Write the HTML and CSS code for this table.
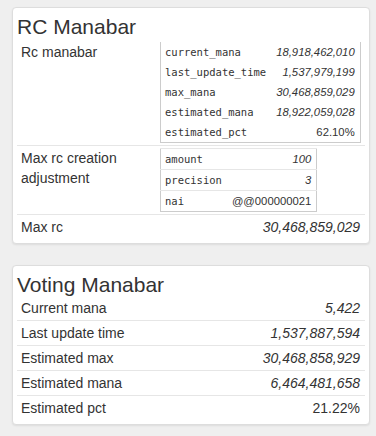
FILE: index.html
```html
<!DOCTYPE html>
<html lang="en">
<head>
    <meta charset="UTF-8">
    <meta name="viewport" content="width=device-width, initial-scale=1.0">
    <title>Manabars</title>
    <link rel="stylesheet" href="styles.css">
</head>
<body>
    <div class="panel">
        <h2>RC Manabar</h2>
        <table class="info-table rc-table">
            <tr>
                <td class="label">Rc manabar</td>
                <td>
                    <table class="sub-table open-top">
                        <tr><td class="key">current_mana</td><td class="num">18,918,462,010</td></tr>
                        <tr><td class="key">last_update_time</td><td class="num">1,537,979,199</td></tr>
                        <tr><td class="key">max_mana</td><td class="num">30,468,859,029</td></tr>
                        <tr><td class="key">estimated_mana</td><td class="num">18,922,059,028</td></tr>
                        <tr><td class="key">estimated_pct</td><td class="plain">62.10%</td></tr>
                    </table>
                </td>
            </tr>
            <tr>
                <td class="label">Max rc creation adjustment</td>
                <td>
                    <table class="sub-table lined">
                        <tr><td class="key">amount</td><td class="num">100</td></tr>
                        <tr><td class="key">precision</td><td class="num">3</td></tr>
                        <tr><td class="key">nai</td><td class="plain">@@000000021</td></tr>
                    </table>
                </td>
            </tr>
            <tr>
                <td class="label">Max rc</td>
                <td class="value num">30,468,859,029</td>
            </tr>
        </table>
    </div>

    <div class="panel">
        <h2>Voting Manabar</h2>
        <table class="info-table">
            <tr><td class="label">Current mana</td><td class="value num">5,422</td></tr>
            <tr><td class="label">Last update time</td><td class="value num">1,537,887,594</td></tr>
            <tr><td class="label">Estimated max</td><td class="value num">30,468,858,929</td></tr>
            <tr><td class="label">Estimated mana</td><td class="value num">6,464,481,658</td></tr>
            <tr><td class="label">Estimated pct</td><td class="value plain">21.22%</td></tr>
        </table>
    </div>
</body>
</html>
```

FILE: styles.css
```css
body {
    font-family: "Liberation Sans", Arial, sans-serif;
    font-size: 14px;
    line-height: 20px;
    color: #333333;
    background-color: #efefef;
    margin: 0;
    padding: 7px 6px 0 12px;
}

.panel {
    background-color: #ffffff;
    border: 1px solid #dddddd;
    border-radius: 4px;
    box-shadow: 0 1px 2px rgba(0, 0, 0, 0.08);
    padding: 0 4px 4px 4px;
    margin-bottom: 21px;
}

.panel h2 {
    font-size: 21px;
    font-weight: normal;
    line-height: 23px;
    margin: 7px 0 0 0;
}

.info-table {
    width: 100%;
    border-collapse: collapse;
}

.info-table > tbody > tr > td {
    padding: 2px 5px 2px 4px;
    vertical-align: top;
    border-top: 1px solid #e6e6e6;
}

.info-table > tbody > tr:first-child > td {
    border-top: none;
}

.rc-table {
    table-layout: fixed;
    margin-top: 2px;
}

.rc-table .label {
    width: 130px;
}

.value {
    text-align: right;
}

.num {
    font-style: italic;
}

/* nested key/value tables */
.sub-table {
    border-collapse: collapse;
    border: 1px solid #cccccc;
    font-size: 11.3px;
    line-height: 20px;
}

.sub-table.open-top {
    border-top: none;
}

.sub-table td {
    padding: 0 5px 0 4px;
}

.sub-table.lined td {
    border-top: 1px solid #e6e6e6;
}

.sub-table .key {
    font-family: "DejaVu Sans Mono", monospace;
    font-size: 10.5px;
}

.sub-table .num,
.sub-table .plain {
    text-align: right;
    padding-left: 5px;
}
```
